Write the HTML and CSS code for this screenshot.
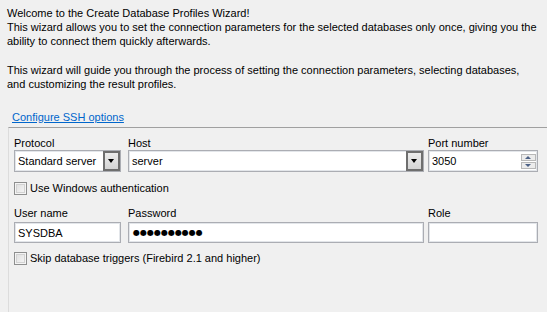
FILE: index.html
```html
<!DOCTYPE html>
<html lang="en">
<head>
    <meta charset="UTF-8">
    <title>Create Database Profiles Wizard</title>
    <link rel="stylesheet" href="styles.css">
</head>
<body>

    <div class="intro">
        <p>Welcome to the Create Database Profiles Wizard!<br>
        This wizard allows you to set the connection parameters for the selected databases only once, giving you the ability to connect them quickly afterwards.</p>
        <p>This wizard will guide you through the process of setting the connection parameters, selecting databases, and customizing the result profiles.</p>
    </div>

    <a class="ssh-link" href="#">Configure SSH options</a>

    <div class="panel">
        <div class="field-row">
            <div class="field">
                <label>Protocol</label>
                <div class="combo">
                    <span class="value">Standard server</span>
                    <span class="drop-btn"></span>
                </div>
            </div>
            <div class="field">
                <label>Host</label>
                <div class="combo">
                    <span class="value">server</span>
                    <span class="drop-btn"></span>
                </div>
            </div>
            <div class="field">
                <label>Port number</label>
                <div class="spin">
                    <span class="value">3050</span>
                    <div class="spin-btns">
                        <span class="spin-up"></span>
                        <span class="spin-down"></span>
                    </div>
                </div>
            </div>
        </div>

        <div class="check"><span class="box"></span>Use Windows authentication</div>

        <div class="field-row second">
            <div class="field">
                <label>User name</label>
                <div class="edit"><span class="value">SYSDBA</span></div>
            </div>
            <div class="field">
                <label>Password</label>
                <div class="edit"><span class="value dots">●●●●●●●●●●</span></div>
            </div>
            <div class="field">
                <label>Role</label>
                <div class="edit"></div>
            </div>
        </div>

        <div class="check last"><span class="box"></span>Skip database triggers (Firebird 2.1 and higher)</div>
    </div>

</body>
</html>
```

FILE: styles.css
```css
* {
    margin: 0;
    padding: 0;
    box-sizing: border-box;
}

body {
    font-family: 'Liberation Sans', Arial, sans-serif;
    font-size: 11px;
    background-color: #f0f0f0;
    color: #000;
    width: 547px;
    height: 312px;
    overflow: hidden;
}

.intro {
    padding: 6px 7px 0;
    line-height: 14px;
}

.intro p {
    margin-bottom: 15px;
}

.ssh-link {
    display: block;
    margin: 19px 0 0 12px;
    line-height: 14px;
    color: #0066cc;
    text-decoration: underline;
    width: max-content;
}

.panel {
    margin: 3px 0 0 8px;
    border-top: 1px solid #a0a0a0;
    border-left: 1px solid #dcdcdc;
    padding: 8px 0 0 5px;
    height: 200px;
}

/* three columns: 107 | 7 gap | 296 | 4 gap | 110 */
.field-row {
    display: grid;
    grid-template-columns: 107px 303px 114px;
}

.field-row .field:nth-child(2) {
    margin-left: 7px;
}

.field-row .field:nth-child(3) {
    margin-left: 4px;
}

.field label {
    display: block;
    line-height: 14px;
}

.combo, .spin, .edit {
    position: relative;
    height: 22px;
    background: #fff;
    border: 1px solid #abadb3;
    box-shadow: inset 0 0 0 1px #e3e6ea;
    display: flex;
    align-items: center;
}

.edit {
    height: 21px;
    margin-top: 2px;
}

.value {
    padding-left: 3px;
}

.dots {
    font-family: 'DejaVu Sans', sans-serif;
    font-size: 8px;
    padding-left: 4px;
}

.drop-btn {
    position: absolute;
    right: 0;
    top: 0;
    width: 17px;
    height: 20px;
    border: 2px solid #6e6e6e;
    background: linear-gradient(#ececec, #d4d4d4);
}

.drop-btn::after {
    content: "";
    position: absolute;
    left: 3px;
    top: 6px;
    border-left: 3.5px solid transparent;
    border-right: 3.5px solid transparent;
    border-top: 4px solid #000;
}

.spin-btns {
    position: absolute;
    right: 1px;
    top: 3px;
    display: flex;
    flex-direction: column;
    gap: 1px;
}

.spin-up, .spin-down {
    position: relative;
    display: block;
    width: 15px;
    height: 7px;
    border: 1px solid #b8b8b8;
    background: #ececec;
}

.spin-up::after, .spin-down::after {
    content: "";
    position: absolute;
    left: 3px;
    top: 1px;
    border-left: 3.5px solid transparent;
    border-right: 3.5px solid transparent;
}

.spin-up::after {
    border-bottom: 3px solid #4d6185;
}

.spin-down::after {
    border-top: 3px solid #4d6185;
}

.check {
    display: flex;
    align-items: center;
    line-height: 14px;
    margin-top: 9px;
}

.check .box {
    width: 13px;
    height: 13px;
    border: 1px solid #8e8f8f;
    background: linear-gradient(135deg, #dcdcdc, #f8f8f8);
    box-shadow: inset 0 0 0 1px #f4f4f4, inset 0 0 0 2px #d2d2d2;
    margin-right: 3px;
}

.second {
    margin-top: 11px;
}

.check.last {
    margin-top: 8px;
}
```
